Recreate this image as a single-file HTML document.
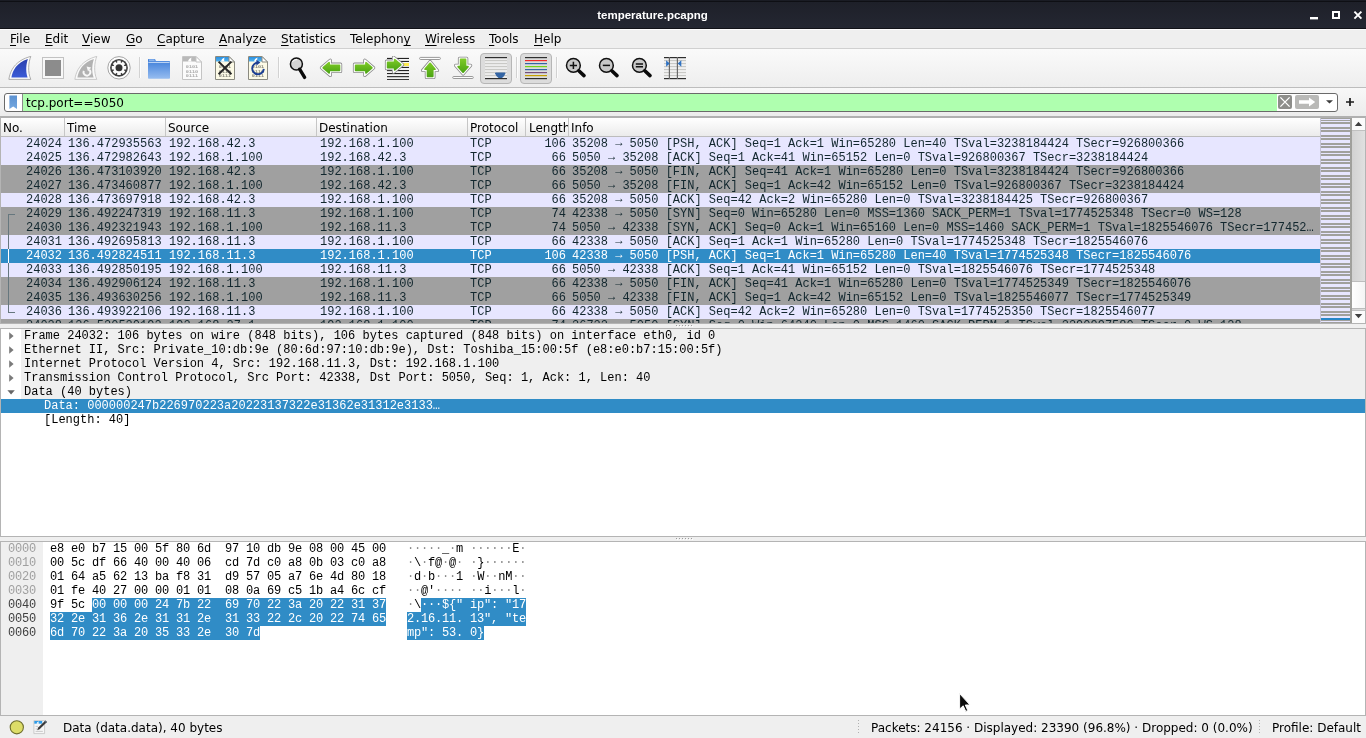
<!DOCTYPE html>
<html><head><meta charset="utf-8"><title>temperature.pcapng</title>
<style>
*{box-sizing:border-box;margin:0;padding:0}
html,body{width:1366px;height:738px;overflow:hidden;background:#efefef;font-family:"DejaVu Sans","Liberation Sans",sans-serif;font-size:12px;color:#000}
.abs{position:absolute}
#title{left:0;top:0;width:1366px;height:29px;background:linear-gradient(#1a1c24 0,#1a1c24 1px,#0e0f14 1px,#0e0f14 2px,#1e2029 2px,#242732 28px,#111218 28px,#111218 29px)}
#title .t{position:absolute;left:0;width:1305px;top:8px;text-align:center;color:#fff;font-family:"Liberation Sans",sans-serif;font-weight:bold;font-size:11.5px;line-height:14px}
#menu{left:0;top:29px;width:1366px;height:20px;background:#efefef;border-top:1px solid #fcfcfc;border-bottom:1px solid #d0d0d0}
#menu span{position:absolute;top:1px;line-height:16px;font-size:12px;white-space:nowrap}
#menu u{text-decoration:underline;text-underline-offset:2px}
#tool{left:0;top:49px;width:1366px;height:39px;background:linear-gradient(#fafafa,#eeeeee);border-bottom:1px solid #bdbdbd}
#filter{left:0;top:88px;width:1366px;height:28px;background:linear-gradient(#f8f8f8,#ececec)}
#finput{left:4px;top:93px;width:1334px;height:19px;border:1px solid #6a6a6a;border-radius:3px;background:#fff;overflow:hidden}
#fgreen{left:18px;top:0;width:1254px;height:17px;background:#afffaf}
#ftext{left:21px;top:1px;line-height:17px;font-size:12px;white-space:nowrap}
#plist{left:0;top:116px;width:1366px;height:208px;border:1px solid #b4b4b4;border-top:2px solid #b0b0b0;background:#fff;overflow:hidden}
#phead{left:1px;top:118px;width:1319px;height:19px;background:linear-gradient(#ffffff,#ebebeb);border-bottom:1px solid #bcbcbc}
#phead span{position:absolute;top:2px;line-height:16px;font-size:12px;white-space:nowrap;overflow:hidden}
#phead i{position:absolute;top:0;width:1px;height:18px;background:#c6c6c6}
#prows{left:1px;top:137px;width:1319px;height:186px;overflow:hidden}
.r{position:relative;height:14px;line-height:14px;white-space:pre;font-family:"Liberation Mono",monospace;font-size:12px;color:#12272e;overflow:hidden}
.r span{position:absolute;top:0;height:14px}
em{font-style:normal;position:relative;top:-1px}
.r.l{background:#e7e6ff} .r.g{background:#a0a0a0} .r.s{background:#308cc6;color:#fff}
.no{left:0;width:61px;text-align:right} .tm{left:67px} .sr{left:168px} .ds{left:319px} .pr{left:469px} .ln{left:524px;width:41px;text-align:right} .in{left:571px;width:746px;overflow:hidden}
#detail{left:0;top:328px;width:1366px;height:209px;background:#fff;border:1px solid #b4b4b4}
.d{position:absolute;height:14px;line-height:14px;white-space:pre;font-family:"Liberation Mono",monospace;font-size:12px;color:#000}
#hex{left:0;top:541px;width:1366px;height:175px;background:#fff;border:1px solid #b4b4b4}
#hexoff{left:1px;top:542px;width:42px;height:173px;background:#efefef}
.h{position:absolute;height:14px;line-height:14px;white-space:pre;font-family:"Liberation Mono",monospace;font-size:12px;letter-spacing:-0.2px;color:#000}
.h b{font-weight:normal;color:#fff}
.h i{font-style:normal;color:#8c8c8c}
.h b i{color:#fff}
.hb{position:absolute;height:14px;background:#308cc6}
#status{left:0;top:716px;width:1366px;height:22px;background:#efefef}
#status span{position:absolute;top:4px;line-height:16px;font-size:12px;white-space:nowrap}
</style></head><body><div id="root" style="position:absolute;left:0;top:0;width:1366px;height:738px;will-change:transform">
<div id="title" class="abs"><div class="t">temperature.pcapng</div>
<svg class="abs" style="left:1300px;top:0px" width="66" height="28" viewBox="0 0 66 28"><rect x="10" y="17" width="8" height="2.4" fill="#fff"/><rect x="33" y="12" width="6" height="6" fill="none" stroke="#fff" stroke-width="2"/><path d="M54.4 11.6l7 7M61.4 11.6l-7 7" stroke="#fff" stroke-width="1.9"/></svg>
</div>
<div id="menu" class="abs">
<span style="left:10px"><u>F</u>ile</span><span style="left:45px"><u>E</u>dit</span><span style="left:82px"><u>V</u>iew</span><span style="left:126px"><u>G</u>o</span><span style="left:157px"><u>C</u>apture</span><span style="left:219px"><u>A</u>nalyze</span><span style="left:281px"><u>S</u>tatistics</span><span style="left:350px">Telephon<u>y</u></span><span style="left:425px"><u>W</u>ireless</span><span style="left:489px"><u>T</u>ools</span><span style="left:534px"><u>H</u>elp</span>
</div>
<div id="tool" class="abs"><svg width="0" height="0" style="position:absolute"><defs>
<linearGradient id="gBlue" x1="0" y1="0" x2="0" y2="1"><stop offset="0" stop-color="#2a3fae"/><stop offset="1" stop-color="#3b5bd6"/></linearGradient>
<linearGradient id="gFold" x1="0" y1="0" x2="0" y2="1"><stop offset="0" stop-color="#3a7bd8"/><stop offset="1" stop-color="#97bdf0"/></linearGradient>
<linearGradient id="gGreen" x1="0" y1="0" x2="0" y2="1"><stop offset="0" stop-color="#7cc926"/><stop offset="1" stop-color="#4da514"/></linearGradient>
<linearGradient id="gHead" x1="0" y1="0" x2="0" y2="1"><stop offset="0" stop-color="#2a8fe0"/><stop offset="1" stop-color="#55b4ee"/></linearGradient>
</defs></svg>
<svg class="abs" style="left:8px;top:7px" width="24" height="24" viewBox="0 0 24 24" ><path d="M0.9 23.4 C2 15 7 4.5 22.8 0.4 C20.5 6 19.5 16 22.8 23.4 Z" fill="#fcfcfc" stroke="#a4a4a4" stroke-width="0.9" stroke-linejoin="round"/><path d="M3.4 21.4 C4.5 15 8.5 6.5 19.9 3 C18.2 8 17.4 15 19.6 21.4 Z" fill="url(#gBlue)"/></svg>
<svg class="abs" style="left:41px;top:7px" width="24" height="24" viewBox="0 0 24 24" ><rect x="1.5" y="1.5" width="21" height="21" fill="#f8f8f8" stroke="#c2c2c2" stroke-width="1"/><rect x="4" y="4" width="16" height="16" fill="#8c8c8c"/></svg>
<svg class="abs" style="left:74px;top:7px" width="24" height="24" viewBox="0 0 24 24" ><path d="M0.9 23.4 C2 15 7 4.5 22.8 0.4 C20.5 6 19.5 16 22.8 23.4 Z" fill="#fafafa" stroke="#c4c4c4" stroke-width="0.9" stroke-linejoin="round"/><path d="M3.4 21.4 C4.5 15 8.5 6.5 19.9 3 C18.2 8 17.4 15 19.6 21.4 Z" fill="#b2b2b2"/><path d="M9.8 14.9 A3.4 3.4 0 1 0 15.4 13.8" fill="none" stroke="#f8f8f8" stroke-width="1.9"/><path d="M12.6 10.6 L17.2 11.6 L14 15.4 Z" fill="#f8f8f8"/></svg>
<svg class="abs" style="left:107px;top:7px" width="24" height="24" viewBox="0 0 24 24" ><circle cx="12" cy="11.8" r="11.2" fill="#fdfdfd" stroke="#8e8e8e" stroke-width="0.8"/><circle cx="12" cy="11.8" r="8.9" fill="#3e3e3e"/><g transform="translate(0 -0.2)"><rect x="10.2" y="4.8" width="3.6" height="3.4" rx="0.5" fill="#fbfbfb" transform="rotate(0 12 12)"/><rect x="10.2" y="4.8" width="3.6" height="3.4" rx="0.5" fill="#fbfbfb" transform="rotate(45 12 12)"/><rect x="10.2" y="4.8" width="3.6" height="3.4" rx="0.5" fill="#fbfbfb" transform="rotate(90 12 12)"/><rect x="10.2" y="4.8" width="3.6" height="3.4" rx="0.5" fill="#fbfbfb" transform="rotate(135 12 12)"/><rect x="10.2" y="4.8" width="3.6" height="3.4" rx="0.5" fill="#fbfbfb" transform="rotate(180 12 12)"/><rect x="10.2" y="4.8" width="3.6" height="3.4" rx="0.5" fill="#fbfbfb" transform="rotate(225 12 12)"/><rect x="10.2" y="4.8" width="3.6" height="3.4" rx="0.5" fill="#fbfbfb" transform="rotate(270 12 12)"/><rect x="10.2" y="4.8" width="3.6" height="3.4" rx="0.5" fill="#fbfbfb" transform="rotate(315 12 12)"/><circle cx="12" cy="12" r="5.5" fill="#fbfbfb"/><circle cx="12" cy="12" r="3.5" fill="#333"/></g></svg>
<div class="abs" style="left:139px;top:8px;width:1px;height:21px;background:#d2d2d2"></div><div class="abs" style="left:140px;top:8px;width:1px;height:21px;background:#fcfcfc"></div>
<svg class="abs" style="left:147px;top:7px" width="24" height="24" viewBox="0 0 24 24" ><path d="M1 3.6 Q1 3 1.8 3 H7.4 Q8.2 3 8.4 3.8 L8.8 5 H22.2 Q23 5 23 5.8 V22 Q23 22.8 22.2 22.8 H1.8 Q1 22.8 1 22 Z" fill="url(#gFold)"/><rect x="1.4" y="5.9" width="21.2" height="0.8" fill="#eaf2fd"/><rect x="2" y="3.4" width="5.6" height="1.4" fill="#9fc2f0"/></svg>
<svg class="abs" style="left:180px;top:7px" width="24" height="24" viewBox="0 0 24 24" ><path d="M2.5 0.5 H16 L21.5 6 V23.5 H2.5 Z" fill="#fbfbfb" stroke="#c4c4c4" stroke-width="1"/><path d="M3 1 H15.8 L20.4 5.6 H3 Z" fill="#b9b9b9"/><path d="M8 5.6 C8.4 3.6 9.6 2 11.6 1.4 C11 2.8 11 4.2 11.6 5.6 Z" fill="#fff"/><path d="M16 0.5 V6 H21.5 Z" fill="#fff" stroke="#c4c4c4" stroke-width="1" stroke-linejoin="round"/><text transform="translate(12 12.3) scale(0.5)" x="0" y="0" font-family="Liberation Mono,monospace" font-size="8.6" font-weight="bold" text-rendering="geometricPrecision" text-anchor="middle" fill="#a8a8a8" textLength="24.6" lengthAdjust="spacingAndGlyphs">0101</text><text transform="translate(12 16.6) scale(0.5)" x="0" y="0" font-family="Liberation Mono,monospace" font-size="8.6" font-weight="bold" text-rendering="geometricPrecision" text-anchor="middle" fill="#a8a8a8" textLength="24.6" lengthAdjust="spacingAndGlyphs">0110</text><text transform="translate(12 21) scale(0.5)" x="0" y="0" font-family="Liberation Mono,monospace" font-size="8.6" font-weight="bold" text-rendering="geometricPrecision" text-anchor="middle" fill="#a8a8a8" textLength="24.6" lengthAdjust="spacingAndGlyphs">0111</text></svg>
<svg class="abs" style="left:213px;top:7px" width="24" height="24" viewBox="0 0 24 24" ><path d="M2.5 0.5 H16 L21.5 6 V23.5 H2.5 Z" fill="#fcfae6" stroke="#8a8a80" stroke-width="1"/><path d="M3 1 H15.8 L20.4 5.6 H3 Z" fill="url(#gHead)"/><path d="M8 5.6 C8.4 3.6 9.6 2 11.6 1.4 C11 2.8 11 4.2 11.6 5.6 Z" fill="#fff"/><path d="M16 0.5 V6 H21.5 Z" fill="#fff" stroke="#8a8a80" stroke-width="1" stroke-linejoin="round"/><text transform="translate(12 12.3) scale(0.5)" x="0" y="0" font-family="Liberation Mono,monospace" font-size="8.6" font-weight="bold" text-rendering="geometricPrecision" text-anchor="middle" fill="#85857a" textLength="24.6" lengthAdjust="spacingAndGlyphs">0101</text><text transform="translate(12 16.6) scale(0.5)" x="0" y="0" font-family="Liberation Mono,monospace" font-size="8.6" font-weight="bold" text-rendering="geometricPrecision" text-anchor="middle" fill="#85857a" textLength="24.6" lengthAdjust="spacingAndGlyphs">0110</text><text transform="translate(12 21) scale(0.5)" x="0" y="0" font-family="Liberation Mono,monospace" font-size="8.6" font-weight="bold" text-rendering="geometricPrecision" text-anchor="middle" fill="#85857a" textLength="24.6" lengthAdjust="spacingAndGlyphs">0111</text><path d="M5.6 5.6 L18.4 18.2 M18.4 5.6 L5.6 18.2" stroke="#262626" stroke-width="2" stroke-linecap="butt"/></svg>
<svg class="abs" style="left:246px;top:7px" width="24" height="24" viewBox="0 0 24 24" ><path d="M2.5 0.5 H16 L21.5 6 V23.5 H2.5 Z" fill="#fcfae6" stroke="#8a8a80" stroke-width="1"/><path d="M3 1 H15.8 L20.4 5.6 H3 Z" fill="url(#gHead)"/><path d="M8 5.6 C8.4 3.6 9.6 2 11.6 1.4 C11 2.8 11 4.2 11.6 5.6 Z" fill="#fff"/><path d="M16 0.5 V6 H21.5 Z" fill="#fff" stroke="#8a8a80" stroke-width="1" stroke-linejoin="round"/><text transform="translate(12 12.3) scale(0.5)" x="0" y="0" font-family="Liberation Mono,monospace" font-size="8.6" font-weight="bold" text-rendering="geometricPrecision" text-anchor="middle" fill="#85857a" textLength="24.6" lengthAdjust="spacingAndGlyphs">0101</text><text transform="translate(12 16.6) scale(0.5)" x="0" y="0" font-family="Liberation Mono,monospace" font-size="8.6" font-weight="bold" text-rendering="geometricPrecision" text-anchor="middle" fill="#85857a" textLength="24.6" lengthAdjust="spacingAndGlyphs">0110</text><text transform="translate(12 21) scale(0.5)" x="0" y="0" font-family="Liberation Mono,monospace" font-size="8.6" font-weight="bold" text-rendering="geometricPrecision" text-anchor="middle" fill="#85857a" textLength="24.6" lengthAdjust="spacingAndGlyphs">0111</text><path d="M12 6.7 A5.8 5.8 0 1 0 17.8 12.9" fill="none" stroke="#1c3f94" stroke-width="1.9"/><path d="M10.4 3.7 L14.4 6.6 L10.4 9.4 Z" fill="#1c3f94"/></svg>
<div class="abs" style="left:278px;top:8px;width:1px;height:21px;background:#d2d2d2"></div><div class="abs" style="left:279px;top:8px;width:1px;height:21px;background:#fcfcfc"></div>
<svg class="abs" style="left:286px;top:7px" width="24" height="24" viewBox="0 0 24 24" ><circle cx="10.4" cy="8" r="6" fill="#d4d4d4" stroke="#111" stroke-width="1.5"/><path d="M6.4 6 A4.4 4.4 0 0 1 11 3.6" fill="none" stroke="#fff" stroke-width="1"/><path d="M13.6 13.2 L18.6 21.4" stroke="#0a0a0a" stroke-width="3.4" stroke-linecap="round"/></svg>
<svg class="abs" style="left:319px;top:7px" width="24" height="24" viewBox="0 0 24 24" ><g transform="" stroke-linejoin="round"><path d="M2.43 11.80 L11.30 4.18 L11.30 8.20 L21.60 8.20 L21.60 15.50 L11.30 15.50 L11.30 19.42 Z" fill="#8a8a8a" stroke="#8a8a8a" stroke-width="3.2"/><path d="M2.43 11.80 L11.30 4.18 L11.30 8.20 L21.60 8.20 L21.60 15.50 L11.30 15.50 L11.30 19.42 Z" fill="#fdfdfd" stroke="#fdfdfd" stroke-width="1.6"/><path d="M4.27 11.80 L10.10 6.79 L10.10 9.40 L20.40 9.40 L20.40 14.30 L10.10 14.30 L10.10 16.81 Z" fill="url(#gGreen)" stroke="url(#gGreen)" stroke-width="1.8"/></g></svg>
<svg class="abs" style="left:352px;top:7px" width="24" height="24" viewBox="0 0 24 24" ><g transform="translate(24.1 0) scale(-1 1)" stroke-linejoin="round"><path d="M2.43 11.80 L11.30 4.18 L11.30 8.20 L21.60 8.20 L21.60 15.50 L11.30 15.50 L11.30 19.42 Z" fill="#8a8a8a" stroke="#8a8a8a" stroke-width="3.2"/><path d="M2.43 11.80 L11.30 4.18 L11.30 8.20 L21.60 8.20 L21.60 15.50 L11.30 15.50 L11.30 19.42 Z" fill="#fdfdfd" stroke="#fdfdfd" stroke-width="1.6"/><path d="M4.27 11.80 L10.10 6.79 L10.10 9.40 L20.40 9.40 L20.40 14.30 L10.10 14.30 L10.10 16.81 Z" fill="url(#gGreen)" stroke="url(#gGreen)" stroke-width="1.8"/></g></svg>
<svg class="abs" style="left:384px;top:7px" width="26" height="24" viewBox="0 0 26 24" ><rect x="3" y="1.9" width="22" height="1.1" fill="#242424"/><rect x="3" y="4.9" width="22" height="1.1" fill="#242424"/><rect x="3" y="7.9" width="22" height="1.1" fill="#242424"/><rect x="3" y="10.9" width="22" height="1.1" fill="#242424"/><rect x="3" y="14" width="22" height="1.1" fill="#242424"/><rect x="3" y="17" width="22" height="1.1" fill="#242424"/><rect x="3" y="20.1" width="22" height="1.1" fill="#242424"/><rect x="3" y="23.1" width="22" height="1.1" fill="#242424"/><rect x="19" y="7" width="6" height="3" fill="#fce94f"/><g transform="" stroke-linejoin="round"><path d="M18.60 8.70 L9.50 1.22 L9.50 5.20 L2.50 5.20 L2.50 12.70 L9.50 12.70 L9.50 16.30 Z" fill="#8a8a8a" stroke="#8a8a8a" stroke-width="3.2"/><path d="M18.60 8.70 L9.50 1.22 L9.50 5.20 L2.50 5.20 L2.50 12.70 L9.50 12.70 L9.50 16.30 Z" fill="#fdfdfd" stroke="#fdfdfd" stroke-width="1.6"/><path d="M16.72 8.70 L10.70 3.76 L10.70 6.40 L3.70 6.40 L3.70 11.50 L10.70 11.50 L10.70 13.73 Z" fill="url(#gGreen)" stroke="url(#gGreen)" stroke-width="1.8"/></g></svg>
<svg class="abs" style="left:418px;top:7px" width="24" height="24" viewBox="0 0 24 24" ><rect x="1.6" y="1.4" width="20.8" height="2.1" rx="1" fill="#fdfdfd" stroke="#8e8e8e" stroke-width="0.9"/><g transform="" stroke-linejoin="round"><path d="M12.10 5.51 L19.49 14.40 L15.90 14.40 L15.90 21.50 L8.40 21.50 L8.40 14.40 L4.59 14.40 Z" fill="#8a8a8a" stroke="#8a8a8a" stroke-width="3.2"/><path d="M12.10 5.51 L19.49 14.40 L15.90 14.40 L15.90 21.50 L8.40 21.50 L8.40 14.40 L4.59 14.40 Z" fill="#fdfdfd" stroke="#fdfdfd" stroke-width="1.6"/><path d="M12.10 7.38 L16.93 13.20 L14.70 13.20 L14.70 20.30 L9.60 20.30 L9.60 13.20 L7.18 13.20 Z" fill="url(#gGreen)" stroke="url(#gGreen)" stroke-width="1.8"/></g></svg>
<svg class="abs" style="left:451px;top:7px" width="24" height="24" viewBox="0 0 24 24" ><rect x="1.7" y="20.5" width="20.6" height="2" rx="1" fill="#fdfdfd" stroke="#8e8e8e" stroke-width="0.9"/><g transform="" stroke-linejoin="round"><path d="M12.10 17.96 L19.65 9.40 L15.70 9.40 L15.70 2.30 L8.50 2.30 L8.50 9.40 L4.55 9.40 Z" fill="#8a8a8a" stroke="#8a8a8a" stroke-width="3.2"/><path d="M12.10 17.96 L19.65 9.40 L15.70 9.40 L15.70 2.30 L8.50 2.30 L8.50 9.40 L4.55 9.40 Z" fill="#fdfdfd" stroke="#fdfdfd" stroke-width="1.6"/><path d="M12.10 16.14 L16.99 10.60 L14.50 10.60 L14.50 3.50 L9.70 3.50 L9.70 10.60 L7.21 10.60 Z" fill="url(#gGreen)" stroke="url(#gGreen)" stroke-width="1.8"/></g></svg>
<div class="abs" style="left:480px;top:4px;width:32px;height:31px;border:1px solid #b6b6b6;border-radius:4px;background:#dcdcdc"></div>
<svg class="abs" style="left:484px;top:7px" width="24" height="24" viewBox="0 0 24 24" ><rect x="1" y="1" width="22" height="22" fill="#ececec"/><rect x="1" y="4" width="22" height="1.1" fill="#c9c9c6"/><rect x="1" y="7" width="22" height="1.1" fill="#c9c9c6"/><rect x="1" y="10" width="22" height="1.1" fill="#c9c9c6"/><rect x="1" y="13" width="22" height="1.1" fill="#c9c9c6"/><rect x="1" y="16" width="22" height="1.1" fill="#c9c9c6"/><rect x="1" y="19" width="22" height="1.1" fill="#c9c9c6"/><rect x="1" y="1" width="22" height="1.2" fill="#2e2e2e"/><rect x="1" y="22" width="22" height="1.2" fill="#2e2e2e"/><path d="M11 17.2 Q11 16.6 12 16.6 H20.6 Q21.6 16.6 21.4 17.4 Q20.4 20.4 18 22 H14.6 Q12 20.4 11 17.2 Z" fill="#3465a4"/></svg>
<div class="abs" style="left:516px;top:8px;width:1px;height:21px;background:#d2d2d2"></div><div class="abs" style="left:517px;top:8px;width:1px;height:21px;background:#fcfcfc"></div>
<div class="abs" style="left:520px;top:4px;width:32px;height:31px;border:1px solid #b6b6b6;border-radius:4px;background:#dcdcdc"></div>
<svg class="abs" style="left:524px;top:7px" width="24" height="24" viewBox="0 0 24 24" ><rect x="1" y="1" width="22" height="1.2" fill="#2e2e2e"/><rect x="1" y="4" width="22" height="1.2" fill="#ef2929"/><rect x="1" y="7" width="22" height="1.2" fill="#3465a4"/><rect x="1" y="10" width="22" height="1.2" fill="#73d216"/><rect x="1" y="13" width="22" height="1.2" fill="#3465a4"/><rect x="1" y="16" width="22" height="1.2" fill="#75507b"/><rect x="1" y="19" width="22" height="1.2" fill="#c4a000"/><rect x="1" y="22" width="22" height="1.2" fill="#2e2e2e"/></svg>
<div class="abs" style="left:556px;top:8px;width:1px;height:21px;background:#d2d2d2"></div><div class="abs" style="left:557px;top:8px;width:1px;height:21px;background:#fcfcfc"></div>
<svg class="abs" style="left:564px;top:7px" width="24" height="24" viewBox="0 0 24 24" ><circle cx="9.4" cy="9.4" r="6.9" fill="#c8c8c8" stroke="#111" stroke-width="1.5"/><path d="M5.8 9.4 H13 M9.4 5.8 V13" stroke="#111" stroke-width="1.5"/><path d="M14.8 14.8 L20 19.6" stroke="#0a0a0a" stroke-width="3.6" stroke-linecap="round"/></svg>
<svg class="abs" style="left:597px;top:7px" width="24" height="24" viewBox="0 0 24 24" ><circle cx="9.4" cy="9.4" r="6.9" fill="#c8c8c8" stroke="#111" stroke-width="1.5"/><path d="M5.8 9.4 H13" stroke="#111" stroke-width="1.5"/><path d="M14.8 14.8 L20 19.6" stroke="#0a0a0a" stroke-width="3.6" stroke-linecap="round"/></svg>
<svg class="abs" style="left:630px;top:7px" width="24" height="24" viewBox="0 0 24 24" ><circle cx="9.4" cy="9.4" r="6.9" fill="#c8c8c8" stroke="#111" stroke-width="1.5"/><path d="M5.8 8 H13 M5.8 10.8 H13" stroke="#111" stroke-width="1.5"/><path d="M14.8 14.8 L20 19.6" stroke="#0a0a0a" stroke-width="3.6" stroke-linecap="round"/></svg>
<svg class="abs" style="left:663px;top:7px" width="24" height="24" viewBox="0 0 24 24" ><rect x="1" y="1" width="22" height="22" fill="#f0f0f0"/><rect x="1" y="4" width="22" height="1.1" fill="#c9c9c6"/><rect x="1" y="7" width="22" height="1.1" fill="#c9c9c6"/><rect x="1" y="10" width="22" height="1.1" fill="#c9c9c6"/><rect x="1" y="13" width="22" height="1.1" fill="#c9c9c6"/><rect x="1" y="16" width="22" height="1.1" fill="#c9c9c6"/><rect x="1" y="19" width="22" height="1.1" fill="#c9c9c6"/><rect x="1" y="1" width="22" height="1.2" fill="#2e2e2e"/><rect x="1" y="22" width="22" height="1.2" fill="#2e2e2e"/><rect x="5.8" y="1" width="1.2" height="22" fill="#6a6a6a"/><rect x="13.8" y="1" width="1.2" height="22" fill="#6a6a6a"/><path d="M3.1 4.2 L6.7 7.5 L3.1 10.8 Z" fill="#2f72c2"/><path d="M18.3 4.2 L14.7 7.5 L18.3 10.8 Z" fill="#2f72c2"/></svg></div>
<div id="filter" class="abs"></div>
<div id="finput" class="abs"><div id="fgreen" class="abs"></div><div class="abs" style="left:17px;top:0;width:1px;height:17px;background:#8a8a8a"></div><div id="ftext" class="abs">tcp.port==5050</div>
<svg class="abs" style="left:4px;top:1px" width="9" height="15" viewBox="0 0 9 15"><defs><linearGradient id="gBk" x1="0" y1="0" x2="0" y2="1"><stop offset="0" stop-color="#5a90d0"/><stop offset="1" stop-color="#74a8e0"/></linearGradient></defs><path d="M0.4 0.4 H8 V14 L4.2 11.4 L0.4 14 Z" fill="url(#gBk)"/></svg>
<div class="abs" style="left:1273px;top:1px;width:14px;height:14px;border-radius:2px;background:#8e8e8b"></div>
<svg class="abs" style="left:1273px;top:1px" width="14" height="14" viewBox="0 0 14 14"><path d="M2.4 2.4 L11.6 11.6 M11.6 2.4 L2.4 11.6" stroke="#fff" stroke-width="1.3"/></svg>
<div class="abs" style="left:1290px;top:1px;width:24px;height:14px;border-radius:2px;background:#b9b9b7"></div>
<svg class="abs" style="left:1290px;top:1px" width="24" height="14" viewBox="0 0 24 14"><path d="M4 5.2 H14 V2.6 L20.2 7 L14 11.4 V8.8 H4 Z" fill="#fff"/></svg>
<svg class="abs" style="left:1320px;top:5px" width="9" height="6" viewBox="0 0 9 6"><path d="M1 1.2 H8 L4.5 4.6 Z" fill="#3c3c3c"/></svg>
</div>
<svg class="abs" style="left:1345px;top:97px" width="10" height="10" viewBox="0 0 10 10"><path d="M1 5 H9 M5 1 V9" stroke="#1c1c1c" stroke-width="1.7"/></svg>
<div id="plist" class="abs"></div>
<div id="phead" class="abs"><span style="left:2px">No.</span><i style="left:63px"></i><span style="left:66px">Time</span><i style="left:164px"></i><span style="left:167px">Source</span><i style="left:315px"></i><span style="left:318px">Destination</span><i style="left:466px"></i><span style="left:469px">Protocol</span><i style="left:524px"></i><span style="left:528px;width:39px">Length</span><i style="left:567px"></i><span style="left:570px">Info</span></div>
<div id="prows" class="abs">
<div class="r l"><span class="no">24024</span><span class="tm">136.472935563</span><span class="sr">192.168.42.3</span><span class="ds">192.168.1.100</span><span class="pr">TCP</span><span class="ln">106</span><span class="in">35208 <em>→</em> 5050 [PSH, ACK] Seq=1 Ack=1 Win=65280 Len=40 TSval=3238184424 TSecr=926800366</span></div>
<div class="r l"><span class="no">24025</span><span class="tm">136.472982643</span><span class="sr">192.168.1.100</span><span class="ds">192.168.42.3</span><span class="pr">TCP</span><span class="ln">66</span><span class="in">5050 <em>→</em> 35208 [ACK] Seq=1 Ack=41 Win=65152 Len=0 TSval=926800367 TSecr=3238184424</span></div>
<div class="r g"><span class="no">24026</span><span class="tm">136.473103920</span><span class="sr">192.168.42.3</span><span class="ds">192.168.1.100</span><span class="pr">TCP</span><span class="ln">66</span><span class="in">35208 <em>→</em> 5050 [FIN, ACK] Seq=41 Ack=1 Win=65280 Len=0 TSval=3238184424 TSecr=926800366</span></div>
<div class="r g"><span class="no">24027</span><span class="tm">136.473460877</span><span class="sr">192.168.1.100</span><span class="ds">192.168.42.3</span><span class="pr">TCP</span><span class="ln">66</span><span class="in">5050 <em>→</em> 35208 [FIN, ACK] Seq=1 Ack=42 Win=65152 Len=0 TSval=926800367 TSecr=3238184424</span></div>
<div class="r l"><span class="no">24028</span><span class="tm">136.473697918</span><span class="sr">192.168.42.3</span><span class="ds">192.168.1.100</span><span class="pr">TCP</span><span class="ln">66</span><span class="in">35208 <em>→</em> 5050 [ACK] Seq=42 Ack=2 Win=65280 Len=0 TSval=3238184425 TSecr=926800367</span></div>
<div class="r g"><span class="no">24029</span><span class="tm">136.492247319</span><span class="sr">192.168.11.3</span><span class="ds">192.168.1.100</span><span class="pr">TCP</span><span class="ln">74</span><span class="in">42338 <em>→</em> 5050 [SYN] Seq=0 Win=65280 Len=0 MSS=1360 SACK_PERM=1 TSval=1774525348 TSecr=0 WS=128</span></div>
<div class="r g"><span class="no">24030</span><span class="tm">136.492321943</span><span class="sr">192.168.1.100</span><span class="ds">192.168.11.3</span><span class="pr">TCP</span><span class="ln">74</span><span class="in">5050 <em>→</em> 42338 [SYN, ACK] Seq=0 Ack=1 Win=65160 Len=0 MSS=1460 SACK_PERM=1 TSval=1825546076 TSecr=177452…</span></div>
<div class="r l"><span class="no">24031</span><span class="tm">136.492695813</span><span class="sr">192.168.11.3</span><span class="ds">192.168.1.100</span><span class="pr">TCP</span><span class="ln">66</span><span class="in">42338 <em>→</em> 5050 [ACK] Seq=1 Ack=1 Win=65280 Len=0 TSval=1774525348 TSecr=1825546076</span></div>
<div class="r s"><span class="no">24032</span><span class="tm">136.492824511</span><span class="sr">192.168.11.3</span><span class="ds">192.168.1.100</span><span class="pr">TCP</span><span class="ln">106</span><span class="in">42338 <em>→</em> 5050 [PSH, ACK] Seq=1 Ack=1 Win=65280 Len=40 TSval=1774525348 TSecr=1825546076</span></div>
<div class="r l"><span class="no">24033</span><span class="tm">136.492850195</span><span class="sr">192.168.1.100</span><span class="ds">192.168.11.3</span><span class="pr">TCP</span><span class="ln">66</span><span class="in">5050 <em>→</em> 42338 [ACK] Seq=1 Ack=41 Win=65152 Len=0 TSval=1825546076 TSecr=1774525348</span></div>
<div class="r g"><span class="no">24034</span><span class="tm">136.492906124</span><span class="sr">192.168.11.3</span><span class="ds">192.168.1.100</span><span class="pr">TCP</span><span class="ln">66</span><span class="in">42338 <em>→</em> 5050 [FIN, ACK] Seq=41 Ack=1 Win=65280 Len=0 TSval=1774525349 TSecr=1825546076</span></div>
<div class="r g"><span class="no">24035</span><span class="tm">136.493630256</span><span class="sr">192.168.1.100</span><span class="ds">192.168.11.3</span><span class="pr">TCP</span><span class="ln">66</span><span class="in">5050 <em>→</em> 42338 [FIN, ACK] Seq=1 Ack=42 Win=65152 Len=0 TSval=1825546077 TSecr=1774525349</span></div>
<div class="r l"><span class="no">24036</span><span class="tm">136.493922106</span><span class="sr">192.168.11.3</span><span class="ds">192.168.1.100</span><span class="pr">TCP</span><span class="ln">66</span><span class="in">42338 <em>→</em> 5050 [ACK] Seq=42 Ack=2 Win=65280 Len=0 TSval=1774525350 TSecr=1825546077</span></div>
<div class="r g"><span class="no">24038</span><span class="tm">136.520530192</span><span class="sr">192.168.27.1</span><span class="ds">192.168.1.100</span><span class="pr">TCP</span><span class="ln">74</span><span class="in">36732 <em>→</em> 5050 [SYN] Seq=0 Win=64240 Len=0 MSS=1460 SACK_PERM=1 TSval=3290997580 TSecr=0 WS=128</span></div>

</div>
<div class="abs" style="left:8px;top:214px;width:1px;height:99px;background:#66777e"></div><div class="abs" style="left:8px;top:214px;width:7px;height:1px;background:#66777e"></div><div class="abs" style="left:8px;top:312px;width:7px;height:1px;background:#66777e"></div><div class="abs" style="left:8px;top:249px;width:1px;height:14px;background:#fff"></div>
<div id="mini" class="abs" style="left:1320px;top:118px;width:32px;height:205px;background:#a0a09c"></div>
<div class="abs" style="left:1320px;top:118px;width:30px;height:205px;border-left:1px solid #c4c3d4;background:repeating-linear-gradient(#a0a09c 0,#a0a09c 1px,#e7e6ff 1px,#e7e6ff 2px,#a0a09c 2px,#a0a09c 4px,#e7e6ff 4px,#e7e6ff 7px,#a0a09c 7px,#a0a09c 8px);background-position:0 2px"></div>
<div class="abs" style="left:1321px;top:318px;width:29px;height:2px;background:#2686c8"></div>
<div id="vsb" class="abs" style="left:1352px;top:118px;width:13px;height:205px;background:linear-gradient(90deg,#d2d2d2,#e0e0e0)"></div>
<div class="abs" style="left:1352px;top:118px;width:13px;height:13px;background:#fbfbfb;border-bottom:1px solid #c0c0c0"></div>
<svg class="abs" style="left:1354px;top:121px" width="9" height="6" viewBox="0 0 9 6"><path d="M4.5 0.8 L8.2 5 H0.8 Z" fill="#404040"/></svg>
<div class="abs" style="left:1352px;top:281px;width:13px;height:28px;background:linear-gradient(90deg,#ffffff,#f4f4f4);border:1px solid #bdbdbd;border-left:0;border-right:0"></div>
<div class="abs" style="left:1352px;top:310px;width:13px;height:13px;background:#fbfbfb;border-top:1px solid #c0c0c0"></div>
<svg class="abs" style="left:1354px;top:313px" width="9" height="6" viewBox="0 0 9 6"><path d="M0.8 1 H8.2 L4.5 5.2 Z" fill="#404040"/></svg>
<div class="abs" style="left:676px;top:325px;width:1px;height:1px;background:#9c9c9c"></div><div class="abs" style="left:677px;top:326px;width:1px;height:1px;background:#fff"></div><div class="abs" style="left:679px;top:325px;width:1px;height:1px;background:#9c9c9c"></div><div class="abs" style="left:680px;top:326px;width:1px;height:1px;background:#fff"></div><div class="abs" style="left:682px;top:325px;width:1px;height:1px;background:#9c9c9c"></div><div class="abs" style="left:683px;top:326px;width:1px;height:1px;background:#fff"></div><div class="abs" style="left:685px;top:325px;width:1px;height:1px;background:#9c9c9c"></div><div class="abs" style="left:686px;top:326px;width:1px;height:1px;background:#fff"></div><div class="abs" style="left:688px;top:325px;width:1px;height:1px;background:#9c9c9c"></div><div class="abs" style="left:689px;top:326px;width:1px;height:1px;background:#fff"></div><div class="abs" style="left:691px;top:325px;width:1px;height:1px;background:#9c9c9c"></div><div class="abs" style="left:692px;top:326px;width:1px;height:1px;background:#fff"></div><div class="abs" style="left:676px;top:538px;width:1px;height:1px;background:#9c9c9c"></div><div class="abs" style="left:677px;top:539px;width:1px;height:1px;background:#fff"></div><div class="abs" style="left:679px;top:538px;width:1px;height:1px;background:#9c9c9c"></div><div class="abs" style="left:680px;top:539px;width:1px;height:1px;background:#fff"></div><div class="abs" style="left:682px;top:538px;width:1px;height:1px;background:#9c9c9c"></div><div class="abs" style="left:683px;top:539px;width:1px;height:1px;background:#fff"></div><div class="abs" style="left:685px;top:538px;width:1px;height:1px;background:#9c9c9c"></div><div class="abs" style="left:686px;top:539px;width:1px;height:1px;background:#fff"></div><div class="abs" style="left:688px;top:538px;width:1px;height:1px;background:#9c9c9c"></div><div class="abs" style="left:689px;top:539px;width:1px;height:1px;background:#fff"></div><div class="abs" style="left:691px;top:538px;width:1px;height:1px;background:#9c9c9c"></div><div class="abs" style="left:692px;top:539px;width:1px;height:1px;background:#fff"></div>
<div id="detail" class="abs"></div>
<div class="abs" style="left:21px;top:329px;width:1344px;height:14px;background:#efefef"></div>
<svg class="abs" style="left:7px;top:331px" width="10" height="10" viewBox="0 0 10 10"><path d="M2.2 1.2 L6.6 5 L2.2 8.8 Z" fill="#7a7a7a"/></svg>
<div class="d" style="left:24px;top:329px">Frame 24032: 106 bytes on wire (848 bits), 106 bytes captured (848 bits) on interface eth0, id 0</div>
<div class="abs" style="left:21px;top:343px;width:1344px;height:14px;background:#efefef"></div>
<svg class="abs" style="left:7px;top:345px" width="10" height="10" viewBox="0 0 10 10"><path d="M2.2 1.2 L6.6 5 L2.2 8.8 Z" fill="#7a7a7a"/></svg>
<div class="d" style="left:24px;top:343px">Ethernet II, Src: Private_10:db:9e (80:6d:97:10:db:9e), Dst: Toshiba_15:00:5f (e8:e0:b7:15:00:5f)</div>
<div class="abs" style="left:21px;top:357px;width:1344px;height:14px;background:#efefef"></div>
<svg class="abs" style="left:7px;top:359px" width="10" height="10" viewBox="0 0 10 10"><path d="M2.2 1.2 L6.6 5 L2.2 8.8 Z" fill="#7a7a7a"/></svg>
<div class="d" style="left:24px;top:357px">Internet Protocol Version 4, Src: 192.168.11.3, Dst: 192.168.1.100</div>
<div class="abs" style="left:21px;top:371px;width:1344px;height:14px;background:#efefef"></div>
<svg class="abs" style="left:7px;top:373px" width="10" height="10" viewBox="0 0 10 10"><path d="M2.2 1.2 L6.6 5 L2.2 8.8 Z" fill="#7a7a7a"/></svg>
<div class="d" style="left:24px;top:371px">Transmission Control Protocol, Src Port: 42338, Dst Port: 5050, Seq: 1, Ack: 1, Len: 40</div>
<div class="abs" style="left:21px;top:385px;width:1344px;height:14px;background:#efefef"></div>
<svg class="abs" style="left:6px;top:387px" width="10" height="10" viewBox="0 0 10 10"><path d="M1.4 3.2 H8.8 L5.1 7.4 Z" fill="#666"/></svg>
<div class="d" style="left:24px;top:385px">Data (40 bytes)</div>
<div class="abs" style="left:1px;top:399px;width:1364px;height:14px;background:#308cc6"></div>
<div class="d" style="left:44px;top:399px;color:#fff">Data: 000000247b226970223a20223137322e31362e31312e3133…</div>
<div class="d" style="left:44px;top:413px">[Length: 40]</div>
<div id="hex" class="abs"></div><div id="hexoff" class="abs"></div>
<div class="h" style="left:8px;top:542px;color:#a0a0a0">0000</div>
<div class="h" style="left:50px;top:542px">e8 e0 b7 15 00 5f 80 6d  97 10 db 9e 08 00 45 00</div><div class="h" style="left:407px;top:542px"><i>·</i><i>·</i><i>·</i><i>·</i><i>·</i>_<i>·</i>m <i>·</i><i>·</i><i>·</i><i>·</i><i>·</i><i>·</i>E<i>·</i></div>
<div class="h" style="left:8px;top:556px;color:#a0a0a0">0010</div>
<div class="h" style="left:50px;top:556px">00 5c df 66 40 00 40 06  cd 7d c0 a8 0b 03 c0 a8</div><div class="h" style="left:407px;top:556px"><i>·</i>\<i>·</i>f@<i>·</i>@<i>·</i> <i>·</i>}<i>·</i><i>·</i><i>·</i><i>·</i><i>·</i><i>·</i></div>
<div class="h" style="left:8px;top:570px;color:#a0a0a0">0020</div>
<div class="h" style="left:50px;top:570px">01 64 a5 62 13 ba f8 31  d9 57 05 a7 6e 4d 80 18</div><div class="h" style="left:407px;top:570px"><i>·</i>d<i>·</i>b<i>·</i><i>·</i><i>·</i>1 <i>·</i>W<i>·</i><i>·</i>nM<i>·</i><i>·</i></div>
<div class="h" style="left:8px;top:584px;color:#a0a0a0">0030</div>
<div class="h" style="left:50px;top:584px">01 fe 40 27 00 00 01 01  08 0a 69 c5 1b a4 6c cf</div><div class="h" style="left:407px;top:584px"><i>·</i><i>·</i>@'<i>·</i><i>·</i><i>·</i><i>·</i> <i>·</i><i>·</i>i<i>·</i><i>·</i><i>·</i>l<i>·</i></div>
<div class="h" style="left:8px;top:598px;color:#404040">0040</div>
<div class="hb" style="left:92px;top:598px;width:294px"></div><div class="hb" style="left:421px;top:598px;width:105px"></div>
<div class="h" style="left:50px;top:598px">9f 5c <b>00 00 00 24 7b 22  69 70 22 3a 20 22 31 37</b></div><div class="h" style="left:407px;top:598px"><i>·</i>\<b><i>·</i><i>·</i><i>·</i>${" ip": "17</b></div>
<div class="h" style="left:8px;top:612px;color:#404040">0050</div>
<div class="hb" style="left:50px;top:612px;width:336px"></div><div class="hb" style="left:407px;top:612px;width:119px"></div>
<div class="h" style="left:50px;top:612px"><b>32 2e 31 36 2e 31 31 2e  31 33 22 2c 20 22 74 65</b></div><div class="h" style="left:407px;top:612px"><b>2.16.11. 13", "te</b></div>
<div class="h" style="left:8px;top:626px;color:#404040">0060</div>
<div class="hb" style="left:50px;top:626px;width:210px"></div><div class="hb" style="left:407px;top:626px;width:77px"></div>
<div class="h" style="left:50px;top:626px"><b>6d 70 22 3a 20 35 33 2e  30 7d</b></div><div class="h" style="left:407px;top:626px"><b>mp": 53. 0}</b></div>
<svg class="abs" style="left:958px;top:692px" width="14" height="21" viewBox="0 0 14 21"><path d="M1.6 1.6 V17 L5.2 13.8 L7.8 19.4 L9.8 18.5 L7.3 13 H12 Z" fill="#0c0c0c" stroke="#fafafa" stroke-width="1" stroke-linejoin="round"/></svg>
<div id="status" class="abs">
<svg class="abs" style="left:9px;top:3px" width="16" height="16" viewBox="0 0 16 16"><circle cx="7.8" cy="8.3" r="6.6" fill="#dddd68" stroke="#6e6e2c" stroke-width="1.1"/></svg>
<svg class="abs" style="left:33px;top:4px" width="15" height="15" viewBox="0 0 15 15"><path d="M0.9 0.6 H11.6 V13.6 H0.9 Z" fill="#f6f6f6" stroke="#c2c2c2" stroke-width="0.8"/><path d="M1.3 1 H9.2 V3.7 H1.3 Z" fill="#2e9be6"/><path d="M3.6 3.7 C3.9 2.6 4.6 1.7 5.8 1.3 C5.4 2.1 5.4 2.9 5.8 3.7 Z" fill="#fff"/><path d="M2.6 11.4 H9.8 M2.6 9 H4.4 M2.6 6.4 H5" stroke="#bdbdbd" stroke-width="0.8"/><path d="M12.4 0.4 L14 2 L6.6 9.2 L4.2 10.2 L5.2 7.6 Z" fill="#3a3a3a"/><path d="M12.4 0.4 L14 2 L13 3 L11.4 1.4 Z" fill="#5a6a78"/></svg>
<span style="left:63px">Data (data.data), 40 bytes</span>
<div class="abs" style="left:858px;top:4px;width:1px;height:15px;background:repeating-linear-gradient(#b0b0b0 0,#b0b0b0 1px,transparent 1px,transparent 3px)"></div>
<span style="left:871px">Packets: 24156 · Displayed: 23390 (96.8%) · Dropped: 0 (0.0%)</span>
<div class="abs" style="left:1259px;top:4px;width:1px;height:15px;background:repeating-linear-gradient(#b0b0b0 0,#b0b0b0 1px,transparent 1px,transparent 3px)"></div>
<span style="left:1272px">Profile: Default</span></div>
</div></body></html>
